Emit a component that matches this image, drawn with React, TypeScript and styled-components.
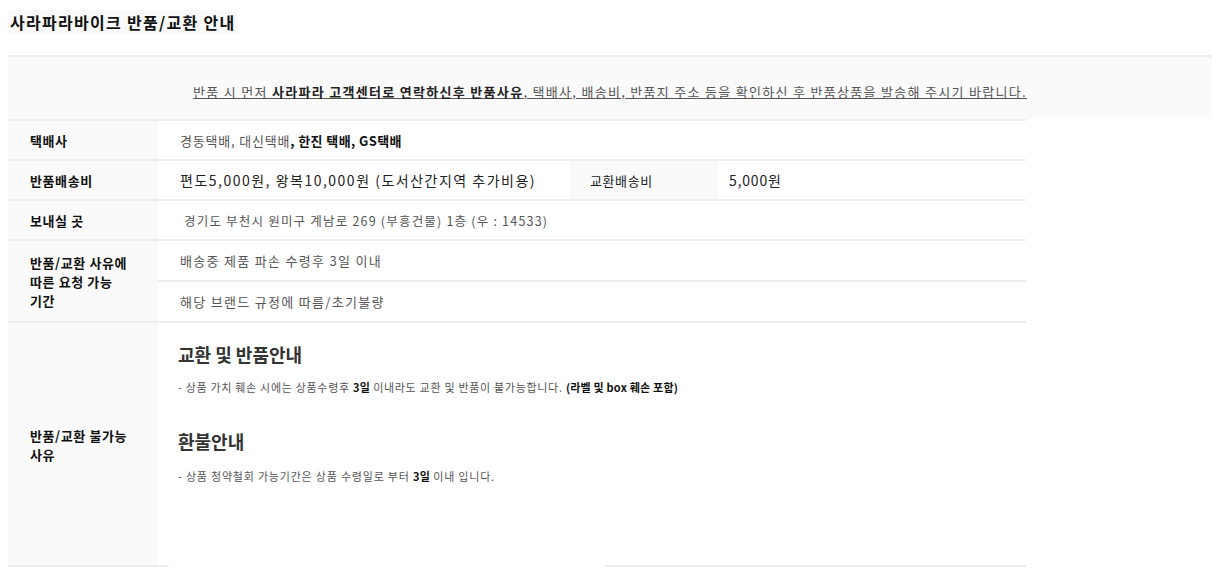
import React from "react";
import styled, { createGlobalStyle } from "styled-components";

const GlobalStyle = createGlobalStyle`
  body {
    margin: 8px;
    background: #ffffff;
    font-family: "Noto Sans CJK KR", "Noto Sans", sans-serif;
    color: #333333;
    word-break: keep-all;
  }
`;

const Title = styled.h2`
  margin: 3px 0 22px 0;
  font-size: 16px;
  line-height: 22px;
  font-weight: 700;
  letter-spacing: 1.3px;
  color: #111111;

  span {
    background: #f9f9f9;
    padding: 0 2px;
  }
`;

const Notice = styled.div`
  border-top: 2px solid #eeeeee;
  background: #fafafa;
  height: 64px;
  display: flex;
  align-items: center;
  justify-content: center;
  padding-top: 6px;
  box-sizing: border-box;
  font-size: 13px;
  letter-spacing: 1.3px;
  color: #555555;

  p {
    margin: 0;
    text-decoration: underline;
  }
  b {
    font-weight: 700;
    color: #222222;
  }
`;

const Table = styled.table`
  width: 1018px;
  table-layout: fixed;
  border-collapse: collapse;
  border-top: 2px solid #eeeeee;
  font-size: 13px;
`;

const Row = styled.tr`
  border-bottom: 2px solid #eeeeee;
`;

const LastRow = styled.tr``;

const Label = styled.th<{ $last?: boolean }>`
  background: #fafafa;
  height: 38px;
  padding: 0 20px 0 22px;
  text-align: left;
  font-weight: 700;
  font-size: 13px;
  line-height: 19px;
  letter-spacing: 0.6px;
  color: #111111;
  box-shadow: ${(p) => (p.$last ? "inset 0 -2px #eeeeee" : "none")};
`;

const Value = styled.td<{ $size?: number; $pad?: number; $ls?: number }>`
  padding: 0 0 0 ${(p) => p.$pad ?? 22}px;
  font-size: ${(p) => p.$size ?? 13}px;
  letter-spacing: ${(p) => p.$ls ?? 1.3}px;
  color: #555555;

  b {
    color: #111111;
    font-weight: 700;
    letter-spacing: 0.4px;
  }
`;

const SubLabel = styled.th`
  background: #fafafa;
  padding: 0 0 0 21px;
  text-align: left;
  font-weight: 400;
  font-size: 13px;
  letter-spacing: 0.6px;
  color: #222222;
`;

const Guide = styled.td`
  padding: 16px 0 83px 20px;
  vertical-align: top;
  background:
    linear-gradient(to right, #eeeeee 0 11px, transparent 11px 447px, #eeeeee 447px)
      bottom / 100% 2px no-repeat,
    #ffffff;
`;

const GuideTitle = styled.h3<{ $top?: number }>`
  margin: ${(p) => p.$top ?? 0}px 0 0 0;
  font-size: 18px;
  line-height: 30px;
  font-weight: 700;
  color: #333333;
`;

const GuideText = styled.p<{ $ls: number; $top: number }>`
  margin: ${(p) => p.$top}px 0 0 0;
  font-size: 11px;
  line-height: 16px;
  letter-spacing: ${(p) => p.$ls}px;
  color: #555555;

  b {
    color: #111111;
    font-weight: 700;
    letter-spacing: 0.2px;
  }
`;

export default function App() {
  return (
    <>
      <GlobalStyle />
      <Title>
        <span>사라파라바이크 반품/교환 안내</span>
      </Title>
      <Notice>
        <p>
          반품 시 먼저 <b>사라파라 고객센터로 연락하신후 반품사유</b>, 택배사, 배송비, 반품지 주소 등을 확인하신 후 반품상품을 발송해 주시기 바랍니다.
        </p>
      </Notice>
      <Table>
        <colgroup>
          <col style={{ width: 150 }} />
          <col style={{ width: 411 }} />
          <col style={{ width: 150 }} />
          <col />
        </colgroup>
        <tbody>
          <Row>
            <Label>택배사</Label>
            <Value colSpan={3} $ls={0.8}>
              경동택배, 대신택배<b>, 한진 택배, GS택배</b>
            </Value>
          </Row>
          <Row>
            <Label>반품배송비</Label>
            <Value $size={14} $ls={1.5} style={{ color: "#222" }}>
              편도5,000원, 왕복10,000원 (도서산간지역 추가비용)
            </Value>
            <SubLabel>교환배송비</SubLabel>
            <Value $size={14} $pad={10} $ls={0.8} style={{ color: "#222" }}>
              5,000원
            </Value>
          </Row>
          <Row>
            <Label>보내실 곳</Label>
            <Value colSpan={3} $size={12.5} $pad={26} $ls={1.2}>
              경기도 부천시 원미구 계남로 269 (부흥건물) 1층 (우 : 14533)
            </Value>
          </Row>
          <Row>
            <Label rowSpan={2}>반품/교환 사유에 따른 요청 가능 기간</Label>
            <Value colSpan={3} style={{ height: 39 }}>
              배송중 제품 파손 수령후 3일 이내
            </Value>
          </Row>
          <Row>
            <Value colSpan={3} style={{ height: 39 }}>
              해당 브랜드 규정에 따름/초기불량
            </Value>
          </Row>
          <LastRow>
            <Label $last>반품/교환 불가능 사유</Label>
            <Guide colSpan={3}>
              <GuideTitle>교환 및 반품안내</GuideTitle>
              <GuideText $ls={0.7} $top={10}>
                - 상품 가치 훼손 시에는 상품수령후 <b>3일</b> 이내라도 교환 및 반품이 불가능합니다. <b>(라벨 및 box 훼손 포함)</b>
              </GuideText>
              <GuideTitle $top={31}>환불안내</GuideTitle>
              <GuideText $ls={0.8} $top={12}>
                - 상품 청약철회 가능기간은 상품 수령일로 부터 <b>3일</b> 이내 입니다.
              </GuideText>
            </Guide>
          </LastRow>
        </tbody>
      </Table>
    </>
  );
}
